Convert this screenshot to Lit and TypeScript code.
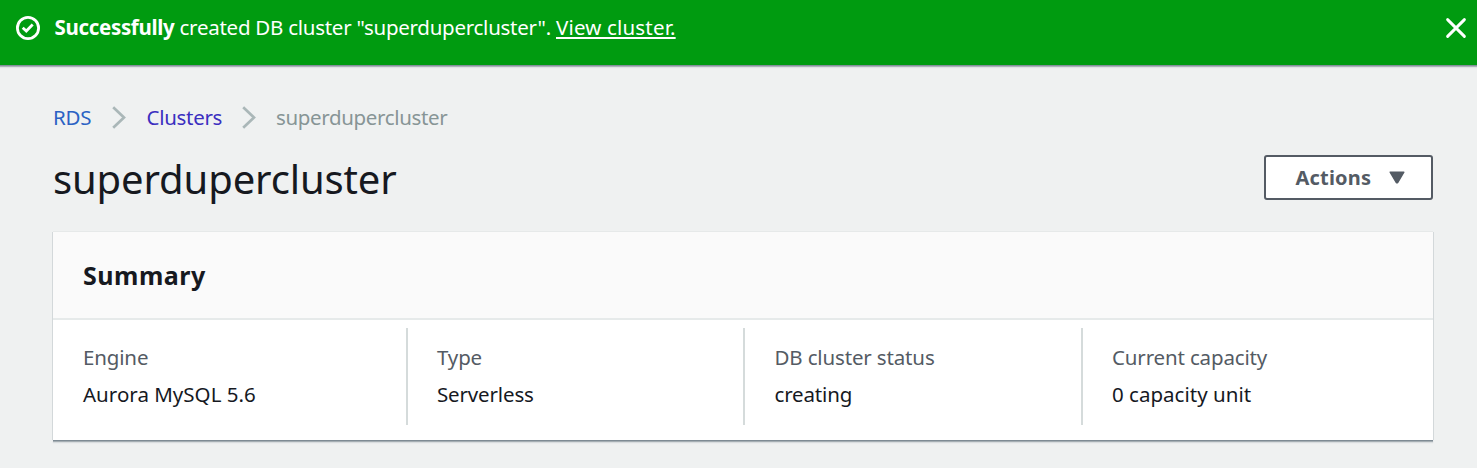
import { LitElement, html, css } from "lit";
import { customElement, property } from "lit/decorators.js";
import { classMap } from "lit/directives/class-map.js";

@customElement("flash-banner")
class FlashBanner extends LitElement {
  static styles = css`
    :host { display: block; position: relative; }
    .banner {
      box-sizing: border-box; height: 65px; padding: 12px 10px 0 16px;
      display: flex; align-items: flex-start;
      background: #009b10; color: #fff;
      font-size: 20.5px; line-height: 30px;
      box-shadow: 0 1px 0 #84909b, 0 2px 0 #aab1b8, 0 3px 1px #dfe2e4;
    }
    .check { width: 24px; height: 24px; margin-top: 4px; flex: none; }
    .message { flex: 1; margin-left: 14.5px; white-space: nowrap; letter-spacing: -0.26px; }
    .strong { font-weight: 700; letter-spacing: -0.32px; }
    .link { color: inherit; letter-spacing: 0.17px; text-decoration: underline; text-decoration-thickness: 2px; text-underline-offset: 2px; text-decoration-skip-ink: none; }
    .close { width: 22px; height: 22px; margin-top: 5px; flex: none; }
  `;
  render() {
    return html`<div class="banner">
      <svg class="check" viewBox="0 0 24 24" fill="none" stroke="#fff">
        <circle cx="12" cy="12" r="10.6" stroke-width="2.8" />
        <path d="M6.7 11.8 10.3 15 16.7 8.6" stroke-width="2.8" />
      </svg>
      <div class="message"><span class="strong">Successfully</span> created DB cluster "superdupercluster". <a class="link">View cluster.</a></div>
      <svg class="close" viewBox="0 0 22 22" fill="none" stroke="#fff" stroke-width="2.9" stroke-linecap="round">
        <path d="M2.6 2.6 19.4 19.4M19.4 2.6 2.6 19.4" />
      </svg>
    </div>`;
  }
}

@customElement("bread-crumbs")
class BreadCrumbs extends LitElement {
  static styles = css`
    :host { display: block; }
    .crumbs { display: flex; align-items: center; height: 30px; font-size: 20.5px; line-height: 30px; letter-spacing: -0.35px; white-space: nowrap; }
    .root { color: #2b62c4; width: 39px; letter-spacing: -0.25px; }
    .parent { color: #3b2fc0; width: 75.5px; padding-left: 0.5px; letter-spacing: -0.3px; }
    .current { color: #879596; }
    .sep { width: 14px; height: 24px; margin: 1px 20.5px 0 19.5px; flex: none; }
  `;
  sep() {
    return html`<svg class="sep" viewBox="0 0 14 24" fill="none" stroke="#aab7b8" stroke-width="2.7"><path d="M1.2 1.2 12 11.5 1.2 21.8" /></svg>`;
  }
  render() {
    return html`<div class="crumbs"><a class="root">RDS</a>${this.sep()}<a class="parent">Clusters</a>${this.sep()}<span class="current">superdupercluster</span></div>`;
  }
}

@customElement("summary-panel")
class SummaryPanel extends LitElement {
  @property({ attribute: false }) items = [
    { label: "Engine", value: "Aurora MySQL 5.6", wide: true },
    { label: "Type", value: "Serverless", wide: false },
    { label: "DB cluster status", value: "creating", wide: false },
    { label: "Current capacity", value: "0 capacity unit", wide: true },
  ];
  static styles = css`
    :host { display: block; }
    .card { height: 208px; background: #fff; box-shadow: 0 -1px 0 #e6e9e9, -1px 0 0 #d3d8da, 1px 0 0 #d3d8da, 0 1px 0 #7e8b94, 0 2px 0 #a5aeb3, 0 3px 1px #d9dddf; }
    .head { box-sizing: border-box; height: 88px; padding: 27px 30px 0; background: #fafafa; border-bottom: 2px solid #e6eaea; }
    .heading { margin: 0; font-size: 25px; line-height: 32px; font-weight: 700; letter-spacing: 0.5px; }
    .body { display: grid; grid-template-columns: 353px 337px 338px 1fr; padding: 8px 0 15px; }
    .cell { box-sizing: border-box; height: 97px; padding: 14px 0 0 29px; border-left: 2px solid #d5dbdb; font-size: 20.5px; line-height: 30px; letter-spacing: -0.15px; white-space: nowrap; }
    .cell:first-child { border-left: 0; padding-left: 30px; }
    .cell:nth-child(3) { padding-left: 29.5px; }
    .label { color: #545b64; }
    .value { margin-top: 7px; color: #16191f; }
    .value.wide { letter-spacing: 0.02px; }
  `;
  render() {
    return html`<section class="card">
      <div class="head"><h2 class="heading">Summary</h2></div>
      <div class="body">${this.items.map((i) => html`<div class="cell"><div class="label">${i.label}</div><div class=${classMap({ value: true, wide: i.wide })}>${i.value}</div></div>`)}</div>
    </section>`;
  }
}

@customElement("app-root")
class AppRoot extends LitElement {
  static styles = css`
    :host { display: block; box-sizing: border-box; height: 468px; overflow: hidden; background: #eff1f1; color: #16191f; font-family: "Noto Sans", "Open Sans", sans-serif; }
    .page { padding: 37px 44px 0 53px; }
    .bar { display: flex; justify-content: space-between; height: 45px; margin: 23px 0 32px; }
    .title { margin: 0; font-size: 40px; line-height: 48px; font-weight: 400; letter-spacing: -0.13px; }
    .button { box-sizing: border-box; width: 169px; height: 45px; padding: 0 26px 0 29.5px; display: flex; align-items: center; justify-content: space-between; border: 2px solid #545b64; border-radius: 3px; background: #fff; color: #545b64; font-family: inherit; font-size: 20px; font-weight: 700; line-height: 28px; letter-spacing: 0.2px; }
    .caret { width: 16px; height: 13px; flex: none; }
  `;
  render() {
    return html`<flash-banner></flash-banner>
      <main class="page">
        <bread-crumbs></bread-crumbs>
        <div class="bar">
          <h1 class="title">superdupercluster</h1>
          <button class="button"><span>Actions</span><svg class="caret" viewBox="0 0 16 13" fill="#545b64" stroke="#545b64" stroke-width="1.5" stroke-linejoin="round"><path d="M1.2 1.2H14.8L8.6 11.7H7.4Z" /></svg></button>
        </div>
        <summary-panel></summary-panel>
      </main>`;
  }
}
